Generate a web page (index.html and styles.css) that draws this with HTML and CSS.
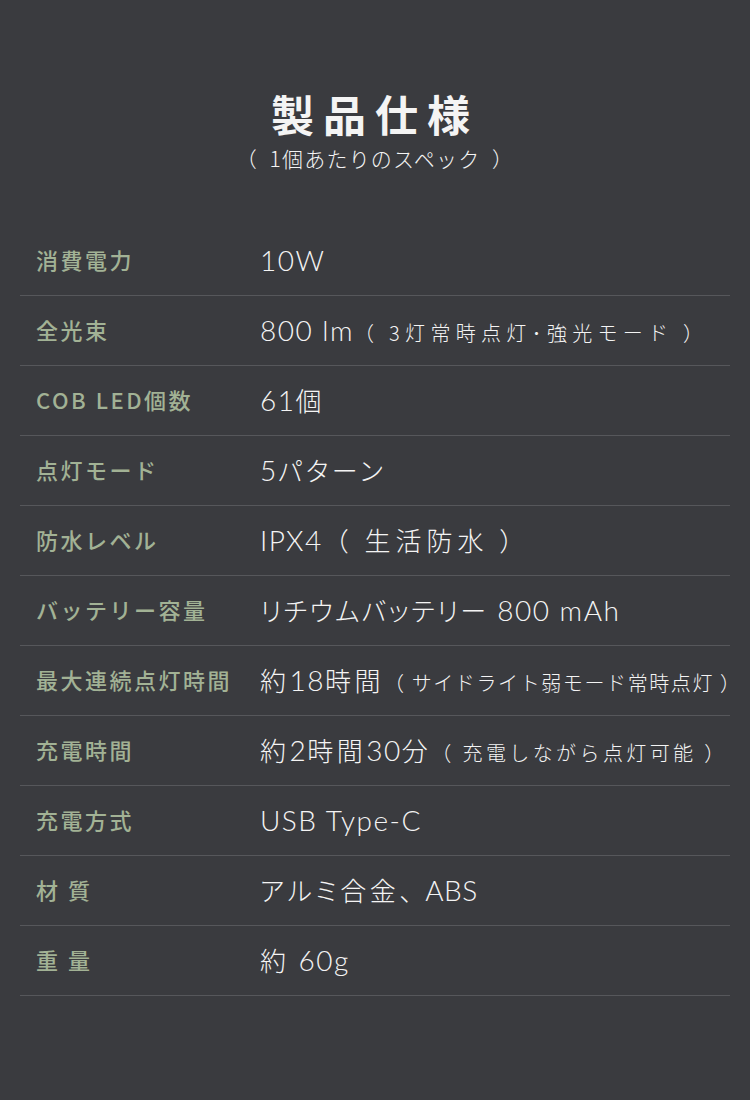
FILE: index.html
```html
<!DOCTYPE html>
<html lang="ja">
<head>
<meta charset="utf-8">
<title>製品仕様</title>
<link rel="stylesheet" href="styles.css">
</head>
<body>
<div class="page">
  <header class="head">
    <h1 class="title">製品仕様</h1>
    <p class="sub">（&ensp;1個あたりのスペック&ensp;）</p>
  </header>
  <div class="specs">
    <div class="row"><div class="label">消費電力</div><div class="value"><span class="en">10W</span></div></div>
    <div class="row"><div class="label">全光束</div><div class="value"><span class="en">800 lm</span><span class="note wide">（ 3灯常時点灯･強光モード ）</span></div></div>
    <div class="row"><div class="label">COB LED個数</div><div class="value"><span class="en">61</span>個</div></div>
    <div class="row"><div class="label">点灯モード</div><div class="value"><span class="en">5</span>パターン</div></div>
    <div class="row"><div class="label">防水レベル</div><div class="value"><span class="en">IPX4</span><span class="paren">（ 生活防水 ）</span></div></div>
    <div class="row"><div class="label">バッテリー容量</div><div class="value"><span class="kana">リチウムバッテリー</span><span class="en"> 800 mAh</span></div></div>
    <div class="row"><div class="label">最大連続点灯時間</div><div class="value">約<span class="en">18</span>時間<span class="note tight">（ サイドライト弱モード常時点灯 ）</span></div></div>
    <div class="row"><div class="label">充電時間</div><div class="value">約<span class="en">2</span>時間<span class="en">30</span>分<span class="note">（ 充電しながら点灯可能 ）</span></div></div>
    <div class="row"><div class="label">充電方式</div><div class="value"><span class="en">USB Type-C</span></div></div>
    <div class="row"><div class="label">材 質</div><div class="value">アルミ合金<span class="comma">、</span><span class="en abs">ABS</span></div></div>
    <div class="row"><div class="label">重 量</div><div class="value">約<span class="en"> 60g</span></div></div>
  </div>
</div>
</body>
</html>
```
FILE: styles.css
```css
html, body {
  margin: 0;
  padding: 0;
  background: #3a3b3f;
}
body {
  font-family: "Noto Sans CJK JP", "Noto Sans", sans-serif;
  color: #f4f4f4;
  min-height: 1100px;
}
.page {
  padding-top: 88px;
}
.head {
  text-align: center;
}
.title {
  margin: 0;
  font-size: 43px;
  line-height: 50px;
  font-weight: 700;
  letter-spacing: 9px;
}
.sub {
  margin: 6px 0 0;
  font-size: 21px;
  line-height: 28px;
  font-weight: 300;
  letter-spacing: 1.2px;
}
.specs {
  margin: 54px 20px 0;
}
.row {
  display: flex;
  align-items: center;
  height: 70px;
  box-sizing: border-box;
  padding-bottom: 3px;
  border-bottom: 1px solid #56575b;
}
.label {
  width: 224px;
  padding-left: 16px;
  color: #a2b295;
  font-size: 22px;
  font-weight: 500;
  letter-spacing: 2.5px;
  flex: none;
}
.value {
  font-size: 26px;
  font-weight: 300;
  letter-spacing: 3.5px;
  font-feature-settings: "palt";
  white-space: nowrap;
}
.en {
  font-family: "Lato", "Noto Sans CJK JP", sans-serif;
  font-size: 28px;
  font-weight: 300;
  letter-spacing: 1.5px;
}
.en.abs {
  letter-spacing: 0.5px;
}
.kana {
  letter-spacing: 2.2px;
}
.comma {
  font-feature-settings: normal;
  letter-spacing: 0;
}
.paren {
  font-feature-settings: normal;
  letter-spacing: 5px;
}
.note {
  font-size: 20px;
  font-feature-settings: normal;
  letter-spacing: 3.4px;
}
.note.wide {
  letter-spacing: 5.3px;
}
.note.tight {
  letter-spacing: 1.6px;
}
```
